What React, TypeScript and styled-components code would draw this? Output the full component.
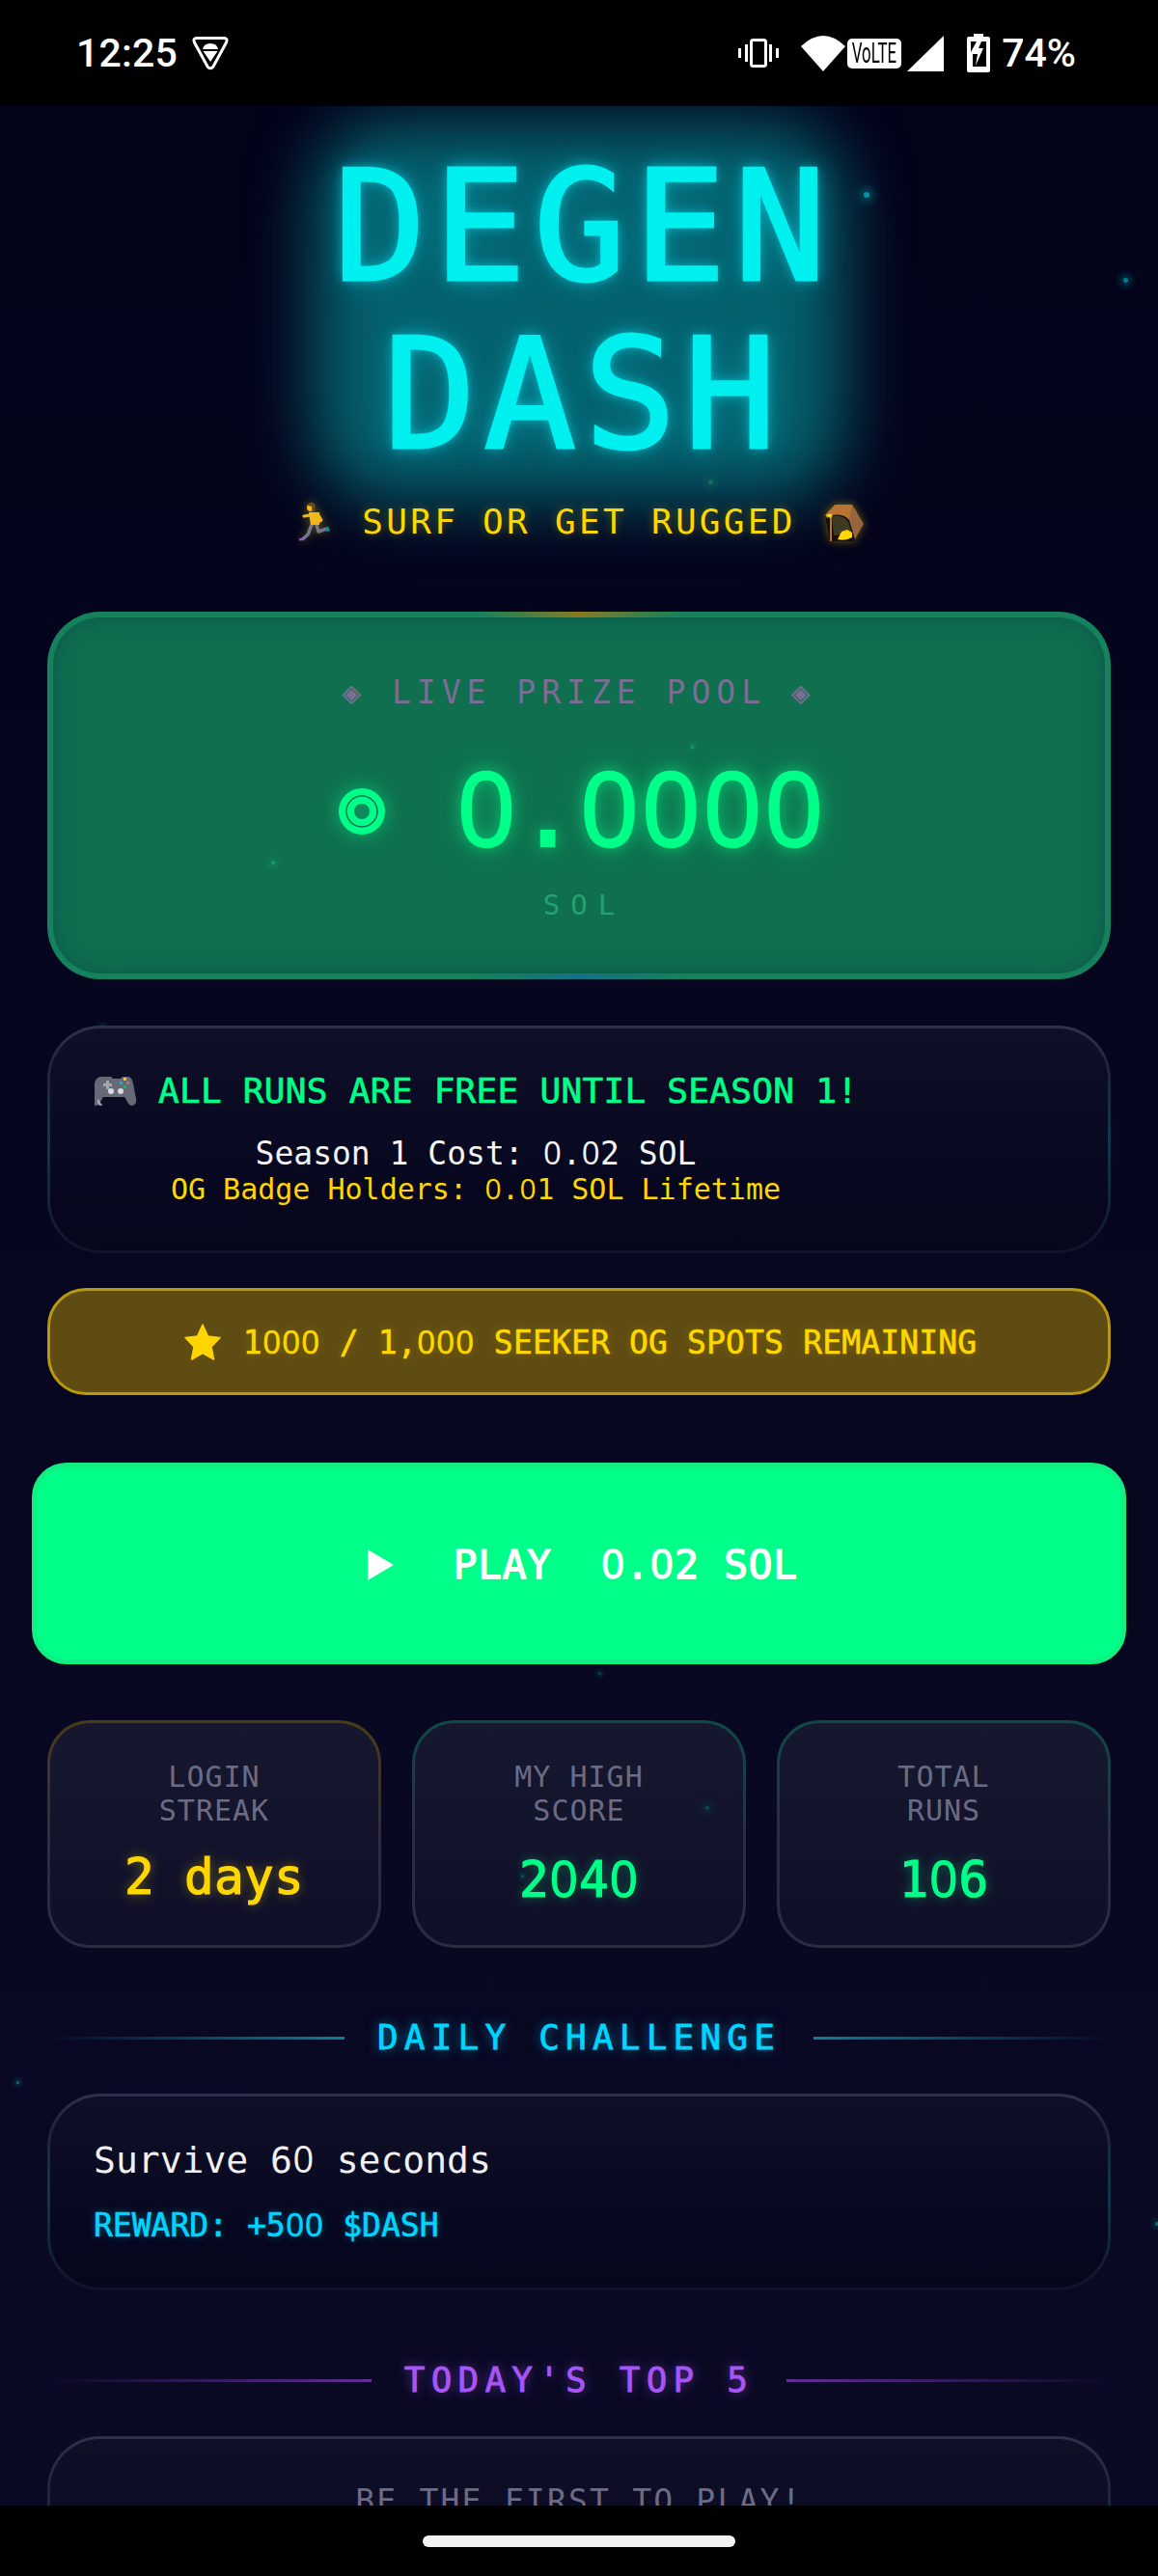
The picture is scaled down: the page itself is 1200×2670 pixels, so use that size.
import * as React from "react";
import styled, { createGlobalStyle } from "styled-components";

const GREEN = "#00ff88";
const GOLD = "#ffd700";
const CYAN = "#00d4ff";
const PURPLE = "#a855f7";
const MUTED = "#6b6b85";
const MONO = `"DejaVu Sans Mono", "Liberation Mono", monospace`;

const GlobalStyle = createGlobalStyle`
  html, body {
    margin: 0;
    padding: 0;
    background: #000;
  }
  * {
    box-sizing: border-box;
  }
`;

const Phone = styled.div`
  width: 1200px;
  height: 2670px;
  display: flex;
  flex-direction: column;
  background: #000;
  overflow: hidden;
  font-family: ${MONO};
`;

/* status bar */
const StatusBar = styled.div`
  height: 110px;
  flex: none;
  display: flex;
  align-items: center;
  padding: 0 85px 0 79px;
  color: #fff;
  font-family: Roboto, sans-serif;
  font-size: 41px;
  font-weight: 500;
  line-height: 1;
`;

const StatusText = styled.span`
  letter-spacing: 0.2px;
`;

const StatusIcon = styled.svg<{ $left?: number }>`
  flex: none;
  margin-left: ${(p) => p.$left ?? 0}px;
  display: block;
`;

const Spacer = styled.div`
  flex: 1;
`;

const Volte = styled.span`
  flex: none;
  display: flex;
  justify-content: center;
  width: 56px;
  height: 31px;
  margin-left: 2px;
  border-radius: 5px;
  background: #fff;
  color: #000;
  font-size: 29px;
  font-weight: 400;
  line-height: 31px;
`;

const VolteText = styled.span`
  display: block;
  transform: scaleX(0.58);
  white-space: nowrap;
`;

const PercentText = styled.span`
  margin-left: 12px;
`;

/* scrolling page */
const Page = styled.div`
  position: relative;
  flex: 1;
  min-height: 0;
  overflow: hidden;
  padding: 38px 49px 0;
  background: linear-gradient(180deg, #03031a 0%, #06061f 45%, #0a0a24 100%);
`;

const Particle = styled.i<{ $color: string; $size: number }>`
  position: absolute;
  width: ${(p) => p.$size}px;
  height: ${(p) => p.$size}px;
  border-radius: 50%;
  background: ${(p) => p.$color};
  box-shadow: 0 0 ${(p) => p.$size * 1.5}px ${(p) => p.$size * 0.8}px ${(p) => p.$color}66;
`;

const Title = styled.h1`
  position: relative;
  z-index: 0;
  margin: 0;
  padding-left: 10px;
  font-size: 159px;
  line-height: 174px;
  font-weight: 400;
  letter-spacing: 8px;
  text-align: center;
  color: #00f0f0;
  -webkit-text-stroke: 3px #00f0f0;
  text-shadow: 0 0 12px #00f0ffaa, 0 0 30px #00f0ff55;

  &::before {
    content: "";
    position: absolute;
    z-index: -1;
    left: 276px;
    top: -22px;
    width: 550px;
    height: 394px;
    border-radius: 80px;
    background: #05606e;
    filter: blur(34px);
  }
`;

const Tagline = styled.div`
  position: relative;
  margin-top: 20px;
  display: flex;
  justify-content: center;
  align-items: center;
  font-size: 36px;
  line-height: 50px;
  letter-spacing: 3.3px;
  white-space: pre;
  color: ${GOLD};
  text-shadow: 0 0 10px #ffd70055;
`;

const Emoji = styled.svg<{ $w: number; $h: number }>`
  flex: none;
  display: inline-block;
  width: ${(p) => p.$w}px;
  height: ${(p) => p.$h}px;
`;

const GlowEmoji = styled(Emoji)`
  filter: drop-shadow(0 0 5px #ffd70066);
`;

const PrizeCard = styled.section`
  height: 381px;
  margin-top: 68px;
  padding-top: 58px;
  border: 6px solid transparent;
  border-radius: 55px;
  background:
    linear-gradient(#0f6f4f, #0f6f4f) padding-box,
    conic-gradient(
        #8a7a20 0deg,
        #14825c 30deg,
        #14825c 150deg,
        #146f88 180deg,
        #14825c 210deg,
        #14825c 330deg,
        #8a7a20 360deg
      )
      border-box;
  box-shadow: inset 0 0 24px #0a4a4a99;
  text-align: center;
`;

const PrizeLabel = styled.div`
  font-size: 33px;
  line-height: 40px;
  letter-spacing: 6px;
  color: #7d6d95;
  white-space: pre;
`;

const PrizeAmount = styled.div`
  margin-top: 38px;
  display: flex;
  justify-content: center;
  align-items: center;
  font-size: 106px;
  line-height: 120px;
  font-weight: 400;
  white-space: pre;
  color: ${GREEN};
  -webkit-text-stroke: 2.5px ${GREEN};
  text-shadow: 0 0 16px #00ff88bb, 0 0 32px #00ff8866;
`;

const Bullseye = styled.svg`
  flex: none;
  width: 63px;
  height: 63px;
  margin-top: 6px;
  filter: drop-shadow(0 0 10px #00ff8888);
`;

const PrizeUnit = styled.div`
  margin-top: 17px;
  font-size: 29px;
  line-height: 40px;
  letter-spacing: 11px;
  padding-left: 11px;
  color: #22a272;
`;

const InfoCard = styled.section<{ $height: number; $top: number; $pad: number }>`
  position: relative;
  height: ${(p) => p.$height}px;
  margin-top: ${(p) => p.$top}px;
  padding: ${(p) => p.$pad}px 46px 0;
  border: 3px solid transparent;
  border-radius: 55px;
  background:
    linear-gradient(180deg, #0f1027 0%, #07071f 70%, #06061d 100%) padding-box,
    linear-gradient(180deg, #30304c 0%, #22233c 18%, #0c3a4a 50%, #13223a 80%, #10122a 100%) border-box;
`;

const SeasonHead = styled.div`
  display: flex;
  align-items: center;
  font-size: 36px;
  line-height: 44px;
  letter-spacing: 0.3px;
  color: ${GREEN};
  -webkit-text-stroke: 0.7px ${GREEN};
  white-space: pre;
`;

const SeasonCost = styled.div`
  display: inline-block;
  margin-top: 24px;
  width: 790px;
  text-align: center;
`;

const CostLine = styled.div<{ $color: string; $size: number }>`
  font-size: ${(p) => p.$size}px;
  line-height: 36px;
  color: ${(p) => p.$color};
  white-space: pre;
`;

const OgBanner = styled.div`
  height: 111px;
  margin-top: 36px;
  display: flex;
  align-items: center;
  justify-content: center;
  border: 3px solid #b8980f;
  border-radius: 40px;
  background: #5f4c12;
  font-size: 33px;
  letter-spacing: 0.15px;
  color: ${GOLD};
  -webkit-text-stroke: 0.6px ${GOLD};
  white-space: pre;
  text-shadow: 0 0 8px #ffd70044;
`;

const PlayButton = styled.button`
  display: flex;
  align-items: center;
  justify-content: center;
  width: 1134px;
  height: 209px;
  margin: 70px -16px 0;
  padding: 0 0 2px 7px;
  border: 5px solid #12ee82;
  border-radius: 36px;
  background: ${GREEN};
  color: #fff;
  font-family: inherit;
  font-size: 41.5px;
  font-weight: 400;
  letter-spacing: 0.5px;
  white-space: pre;
  -webkit-text-stroke: 1.3px #fff;
`;

const PlayArrow = styled.svg`
  flex: none;
  width: 27px;
  height: 32px;
  margin-right: 62px;
  margin-top: 4px;
`;

const StatsRow = styled.div`
  display: grid;
  grid-template-columns: repeat(3, 346px);
  justify-content: space-between;
  margin-top: 58px;
`;

const StatCard = styled.div<{ $edge: string }>`
  height: 236px;
  padding-top: 38px;
  border: 3px solid transparent;
  border-radius: 44px;
  text-align: center;
  background:
    linear-gradient(180deg, #161830 0%, #0f1028 100%) padding-box,
    linear-gradient(180deg, ${(p) => p.$edge} 0%, #2b2b42 55%, #2b2b42 100%) border-box;
`;

const StatLabel = styled.div`
  font-size: 30px;
  line-height: 35px;
  letter-spacing: 1px;
  color: ${MUTED};
`;

const StatValue = styled.div<{ $color: string }>`
  margin-top: 22px;
  font-size: 51px;
  line-height: 60px;
  letter-spacing: 0.3px;
  color: ${(p) => p.$color};
  -webkit-text-stroke: 1.2px ${(p) => p.$color};
  text-shadow: 0 0 12px ${(p) => p.$color}77;
`;

const SectionHead = styled.div<{ $top: number }>`
  display: flex;
  align-items: center;
  gap: 34px;
  margin-top: ${(p) => p.$top}px;
`;

const SectionRule = styled.div<{ $color: string; $dir: string }>`
  flex: 1;
  height: 3px;
  background: linear-gradient(${(p) => p.$dir}, transparent, ${(p) => p.$color});
`;

const SectionTitle = styled.h2<{ $color: string }>`
  margin: 0;
  font-size: 36px;
  line-height: 44px;
  font-weight: 400;
  letter-spacing: 6.2px;
  color: ${(p) => p.$color};
  -webkit-text-stroke: 0.8px ${(p) => p.$color};
  text-shadow: 0 0 12px ${(p) => p.$color}99;
  white-space: pre;
`;

const ChallengeText = styled.div`
  margin-left: -1px;
  font-size: 38px;
  line-height: 50px;
  color: #f0f0f0;
`;

const RewardText = styled.div`
  margin: 22px 0 0 -1px;
  font-size: 33px;
  line-height: 40px;
  color: ${CYAN};
  -webkit-text-stroke: 0.7px ${CYAN};
  text-shadow: 0 0 8px #00d4ff66;
`;

const EmptyText = styled.div`
  font-size: 33px;
  line-height: 40px;
  letter-spacing: 2.2px;
  text-align: center;
  color: ${MUTED};
`;

const NavBar = styled.div`
  height: 73px;
  flex: none;
  display: flex;
  justify-content: center;
  padding-top: 31px;
  background: #000;
`;

const HomePill = styled.div`
  width: 324px;
  height: 12px;
  border-radius: 6px;
  background: #f2f2f2;
`;

/* the app's monospace has a plain zero, DejaVu's has a dot in it */
const Zero = styled.span`
  font-family: "Open Sans", sans-serif;
  padding: 0 0.015em;
`;

const Mono: React.FC<{ children: string }> = ({ children }) => (
  <>
    {children.split(/(0)/).map((part, i) =>
      part === "0" ? <Zero key={i}>0</Zero> : part
    )}
  </>
);

const particles = [
  { x: 895, y: 89, size: 6, color: "#00a0b0" },
  { x: 1164, y: 178, size: 5, color: "#007f90" },
  { x: 734, y: 387, size: 5, color: "#3d8a20" },
  { x: 281, y: 782, size: 4, color: "#1a9a6a" },
  { x: 716, y: 663, size: 3, color: "#1a9a6a" },
  { x: 293, y: 971, size: 5, color: "#6a5a10" },
  { x: 105, y: 953, size: 3, color: "#0a6a70" },
  { x: 620, y: 1623, size: 3, color: "#0a4a5a" },
  { x: 731, y: 1762, size: 4, color: "#0a4a50" },
  { x: 540, y: 1833, size: 3, color: "#0a5a5a" },
  { x: 17, y: 2047, size: 3, color: "#0a7070" },
  { x: 625, y: 2121, size: 5, color: "#6a5a10" },
  { x: 1197, y: 2193, size: 4, color: "#0a6a70" },
];

const Runner = () => (
  <GlowEmoji $w={45} $h={44} viewBox="0 0 45 44">
    <g fill="none" strokeLinecap="round" strokeLinejoin="round">
      <path d="M18 25 L14 35 L9 39.5" stroke="#75758c" strokeWidth="3.5" />
      <path d="M23 25 L25 32 L32 29.5" stroke="#75758c" strokeWidth="3.5" />
      <path d="M17 15 L10 16" stroke="#f2b71f" strokeWidth="3" />
      <path d="M25 15 L28 20 L25 22" stroke="#f2b71f" strokeWidth="3" />
    </g>
    <path d="M15 12 H26 L26 25 H17 Z" fill="#f2b71f" />
    <circle cx="17" cy="7" r="4" fill="#f2b71f" />
    <path d="M14 5 Q15 1 19 2 Q23 4 21 9 L18 11 L18 6 Z" fill="#6b4a1a" />
    <path d="M32 28 L35 26.5 L37 31 L33.5 32 Z" fill="#1787a8" />
    <path d="M5 39 L10 38.5 L10 41 L5 41.5 Z" fill="#8b5fb5" />
  </GlowEmoji>
);

const Cave = () => (
  <GlowEmoji $w={45} $h={44} viewBox="0 0 45 44">
    <path d="M5 15 L15 4 H33 L45 24 L35 42 H10 Z" fill="#16100c" />
    <path d="M5 15 L15 4 H33 L38 12 L30 20 Q24 13 12 15 L7 18 Z" fill="#b87333" />
    <path d="M33 4 L45 24 L36 40 L30 20 Z" fill="#96643f" />
    <path d="M12 16 Q24 14 29 22 L33 34 L14 36 Z" fill="#3d3a22" />
    <path d="M18 40 L22 32 L28 30 L33 33 L33 38 Q26 42 18 40 Z" fill="#ffd700" />
    <rect x="10" y="15" width="2" height="27" fill="#b87333" />
    <path d="M6 15 q4 -3 7 0 l-3 3z" fill="#ffd700" />
  </GlowEmoji>
);

const Gamepad = () => (
  <Emoji $w={44} $h={34} viewBox="0 0 44 34">
    <path d="M10 2 h7 l2 2 h8 l2 -2 h6 q4 1 5 7 l3 16 q1 6 -4 7 q-3 0 -5 -4 l-3 -5 h-22 l-3 5 q-2 4 -5 4 q-5 -1 -4 -7 l3 -16 q1 -6 6 -7z" fill="#666a77" />
    <path d="M5 26 q1 5 4 5 l-3 1 q-4 -1 -3 -7z" fill="#a5a7b0" />
    <path d="M9 9 h3 v-3 h3 v3 h3 v3 h-3 v3 h-3 v-3 h-3z" fill="#a5a7b0" />
    <circle cx="17" cy="17" r="3" fill="#d8d8de" />
    <circle cx="27" cy="17" r="3" fill="#d8d8de" />
    <rect x="30" y="3" width="3" height="3" fill="#f6c21a" />
    <rect x="26" y="7" width="3" height="3" fill="#20a8d8" />
    <rect x="33" y="7" width="3" height="3" fill="#e07030" />
    <rect x="30" y="11" width="3" height="3" fill="#20b060" />
  </Emoji>
);

const Star = () => (
  <Emoji $w={44} $h={38} viewBox="0 0 44 38">
    <path
      d="M22 1 L27.5 13 L40 14.5 L31 24 L33.5 37 L22 30.5 L10.5 37 L13 24 L4 14.5 L16.5 13 Z"
      fill="#ffd500"
      stroke="#ffd500"
      strokeWidth="1.5"
      strokeLinejoin="round"
    />
  </Emoji>
);

const App: React.FC = () => {
  return (
    <Phone>
      <GlobalStyle />
      <StatusBar>
        <StatusText>12:25</StatusText>
        <StatusIcon $left={14} width="40" height="36" viewBox="0 0 40 36">
          <path
            d="M6 2.5 H34 Q38.5 2.5 36.5 7 L23 32 Q20 35.5 17 32 L3.5 7 Q1.5 2.5 6 2.5 Z"
            fill="none"
            stroke="#fff"
            strokeWidth="3"
          />
          <path d="M12 14 Q13 8 20 8 Q27 8 28 14 Z" fill="#fff" />
          <path d="M12.5 16 H27.5 L20 27 Z" fill="#fff" />
        </StatusIcon>
        <Spacer />
        <StatusIcon width="42" height="30" viewBox="0 0 42 30">
          <rect x="0" y="10" width="3" height="10" fill="#fff" />
          <rect x="7" y="6" width="3" height="18" fill="#fff" />
          <rect x="13.5" y="1.5" width="15" height="27" rx="2" fill="none" stroke="#fff" strokeWidth="3" />
          <rect x="32" y="6" width="3" height="18" fill="#fff" />
          <rect x="39" y="10" width="3" height="10" fill="#fff" />
        </StatusIcon>
        <StatusIcon $left={23} width="46" height="37" viewBox="0 0 46 37">
          <path d="M0 11 Q23 -11 46 11 L23 37 Z" fill="#fff" />
        </StatusIcon>
        <Volte>
          <VolteText>VoLTE</VolteText>
        </Volte>
        <StatusIcon $left={6} width="38" height="37" viewBox="0 0 38 37">
          <path d="M38 0 V37 H0 Z" fill="#fff" />
        </StatusIcon>
        <StatusIcon $left={24} width="24" height="40" viewBox="0 0 24 40">
          <path
            d="M7 0 H17 V3 H22 Q24 3 24 5 V38 Q24 40 22 40 H2 Q0 40 0 38 V5 Q0 3 2 3 H7 Z M4 8 V19 L10 8 Z M20 8 H15 L12 15 H17 L9 33 L11 21 H6 L6 34 H20 Z"
            fill="#fff"
            fillRule="evenodd"
          />
        </StatusIcon>
        <PercentText>74%</PercentText>
      </StatusBar>

      <Page>
        {particles.map((p, i) => (
          <Particle
            key={i}
            $color={p.color}
            $size={p.size}
            style={{ left: p.x, top: p.y }}
          />
        ))}

        <Title>
          DEGEN
          <br />
          DASH
        </Title>
        <Tagline>
          <Runner />
          <span> SURF OR GET RUGGED </span>
          <Cave />
        </Tagline>

        <PrizeCard>
          <PrizeLabel>◈ LIVE PRIZE POOL ◈</PrizeLabel>
          <PrizeAmount>
            <Bullseye viewBox="0 0 63 63">
              <circle cx="30" cy="31" r="24" fill="#00ff88" />
              <circle cx="30" cy="31" r="16" fill="none" stroke="#0f6f4f" strokeWidth="1.5" />
              <circle cx="30" cy="31" r="8" fill="#0f8a5c" />
            </Bullseye>
            <span>
              {" "}
              <Mono>0.0000</Mono>
            </span>
          </PrizeAmount>
          <PrizeUnit>SOL</PrizeUnit>
        </PrizeCard>

        <InfoCard $height={236} $top={48} $pad={43}>
          <SeasonHead>
            <Gamepad />
            <span> ALL RUNS ARE FREE UNTIL SEASON 1!</span>
          </SeasonHead>
          <SeasonCost>
            <CostLine $color="#f4f4f4" $size={33}>
              Season 1 Cost: <Mono>0.02</Mono> SOL
            </CostLine>
            <CostLine $color={GOLD} $size={30}>
              OG Badge Holders: <Mono>0.01</Mono> SOL Lifetime
            </CostLine>
          </SeasonCost>
        </InfoCard>

        <OgBanner>
          <Star />
          <span>
            {" "}
            <Mono>1000</Mono> / 1,<Mono>000</Mono> SEEKER OG SPOTS REMAINING
          </span>
        </OgBanner>

        <PlayButton>
          <PlayArrow viewBox="0 0 27 32">
            <path d="M0 0 L27 16 L0 32 Z" fill="#fff" />
          </PlayArrow>
          <span>
            {"PLAY  "}
            <Mono>0.02</Mono> SOL
          </span>
        </PlayButton>

        <StatsRow>
          <StatCard $edge="#4a3c18">
            <StatLabel>LOGIN</StatLabel>
            <StatLabel>STREAK</StatLabel>
            <StatValue $color={GOLD}>2 days</StatValue>
          </StatCard>
          <StatCard $edge="#0f4a46">
            <StatLabel>MY HIGH</StatLabel>
            <StatLabel>SCORE</StatLabel>
            <StatValue $color={GREEN}>
              2<Mono>040</Mono>
            </StatValue>
          </StatCard>
          <StatCard $edge="#0f4a46">
            <StatLabel>TOTAL</StatLabel>
            <StatLabel>RUNS</StatLabel>
            <StatValue $color={GREEN}>
              1<Mono>06</Mono>
            </StatValue>
          </StatCard>
        </StatsRow>

        <SectionHead $top={71}>
          <SectionRule $color="#0a7f95" $dir="to right" />
          <SectionTitle $color={CYAN}>DAILY CHALLENGE</SectionTitle>
          <SectionRule $color="#0a7f95" $dir="to left" />
        </SectionHead>

        <InfoCard $height={204} $top={36} $pad={39}>
          <ChallengeText>
            Survive 6<Mono>0</Mono> seconds
          </ChallengeText>
          <RewardText>
            REWARD: +5<Mono>00</Mono> $DASH
          </RewardText>
        </InfoCard>

        <SectionHead $top={71}>
          <SectionRule $color="#5f2f96" $dir="to right" />
          <SectionTitle $color={PURPLE}>TODAY'S TOP 5</SectionTitle>
          <SectionRule $color="#5f2f96" $dir="to left" />
        </SectionHead>

        <InfoCard $height={300} $top={36} $pad={45}>
          <EmptyText>BE THE FIRST TO PLAY!</EmptyText>
        </InfoCard>
      </Page>

      <NavBar>
        <HomePill />
      </NavBar>
    </Phone>
  );
};

export default App;
